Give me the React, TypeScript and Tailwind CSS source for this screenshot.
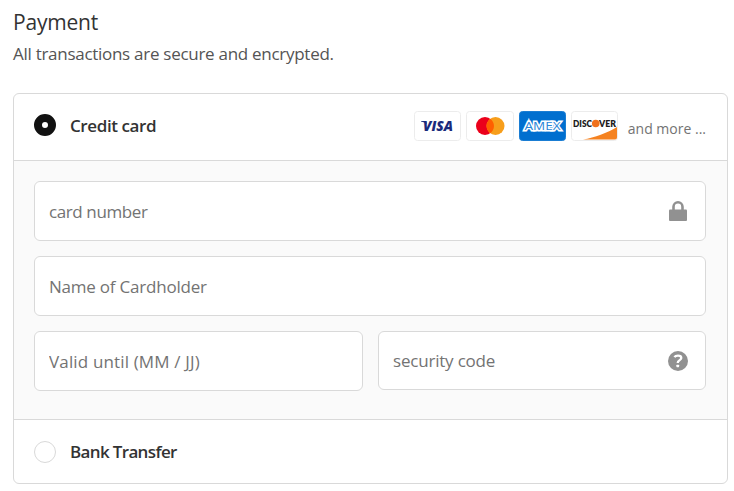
import { useState } from "react";

function VisaLogo() {
  return (
    <svg width="47" height="30" viewBox="0 0 47 30">
      <rect x="0.5" y="0.5" width="46" height="29" rx="3" fill="#fff" stroke="#ececec" />
      <text
        x="9"
        y="20"
        fontFamily="Open Sans, sans-serif"
        fontSize="14"
        fontWeight="800"
        fontStyle="italic"
        fill="#1a2a7c"
        textLength="30"
        lengthAdjust="spacingAndGlyphs"
      >
        VISA
      </text>
      <path d="M7 10h5l1 3c-1.600-1.400-3.500-2.200-6-2.600z" fill="#1a2a7c" />
    </svg>
  );
}

function MastercardLogo() {
  return (
    <svg width="48" height="30" viewBox="0 0 48 30">
      <rect x="0.5" y="0.5" width="47" height="29" rx="3" fill="#fff" stroke="#ececec" />
      <circle cx="19" cy="15" r="9" fill="#eb001b" />
      <circle cx="29.500" cy="15" r="9" fill="#f79e1b" />
      <path d="M24.250 7.700a9 9 0 0 1 0 14.600a9 9 0 0 1 0-14.600z" fill="#ff5f00" />
    </svg>
  );
}

function AmexLogo() {
  return (
    <svg width="47" height="30" viewBox="0 0 47 30">
      <rect x="0.5" y="0.5" width="46" height="29" rx="3" fill="#006fcf" stroke="#1a7dd3" />
      <text
        x="5.500"
        y="19"
        fontFamily="Open Sans, sans-serif"
        fontSize="11.500"
        fontWeight="500"
        fill="#2a86d8"
        stroke="#fff"
        strokeWidth="2.800"
        paintOrder="stroke"
        textLength="36"
        lengthAdjust="spacingAndGlyphs"
      >
        AMEX
      </text>
    </svg>
  );
}

function DiscoverLogo() {
  return (
    <svg width="47" height="30" viewBox="0 0 47 30">
      <rect x="0.5" y="0.5" width="46" height="29" rx="3" fill="#fff" stroke="#ececec" />
      <path d="M12 28.500C24 26.500 36 22 46 16v10.500q0 2-2 2z" fill="#f58220" />
      <g fontFamily="Lato, sans-serif" fontSize="10" fontWeight="800" fill="#1d1d1d">
        <text x="2" y="16" textLength="19" lengthAdjust="spacingAndGlyphs">
          DISC
        </text>
        <text x="28" y="16" textLength="17" lengthAdjust="spacingAndGlyphs">
          VER
        </text>
      </g>
      <circle cx="24.700" cy="12.500" r="3.800" fill="#f0711d" />
    </svg>
  );
}

function LockIcon() {
  return (
    <svg width="18" height="20" viewBox="0 0 18 20">
      <path d="M4.500 10V5.800a4.500 4.500 0 0 1 9 0V10" fill="none" stroke="#919191" strokeWidth="2.600" />
      <rect x="0" y="8.500" width="18" height="11.500" rx="1" fill="#919191" />
    </svg>
  );
}

function HelpIcon() {
  return (
    <svg width="20" height="20" viewBox="0 0 20 20">
      <circle cx="10" cy="10" r="10" fill="#919191" />
      <path
        d="M6.400 6.200C7.200 5 8.500 4.700 10 4.700c2.100 0 3.300 0.900 3.300 2.300 0 2.200-3.600 2.200-3.600 5"
        fill="none"
        stroke="#fff"
        strokeWidth="2.300"
      />
      <rect x="8.400" y="13.700" width="2.700" height="2.500" rx="0.600" fill="#fff" />
    </svg>
  );
}

const inputClass =
  "w-full h-full rounded-[6px] border border-[#d9d9d9] bg-white px-[14px] text-[17px] text-[#737373] placeholder:text-[#737373] outline-none";

export default function App() {
  const [method, setMethod] = useState("card");

  // Radio dot, filled when its method is selected
  const radioClass = (name: string) =>
    `w-[22px] h-[22px] shrink-0 rounded-full bg-white ${
      method === name ? "border-8 border-[#111111]" : "border border-[#d9d9d9]"
    }`;

  return (
    <div className="h-[491px] bg-white pl-[13px] pr-[6px] pt-2 font-['Open_Sans',sans-serif] text-[#333333]">
      <h2 className="text-[21px] leading-7 tracking-[-0.2px]">Payment</h2>
      <p className="mt-1 text-[17px] leading-7 tracking-[-0.28px] text-[#545454]">
        All transactions are secure and encrypted.
      </p>

      <div className="mt-[25px] h-[391px] overflow-hidden rounded-[6px] border border-[#d9d9d9]">
        {/* Credit card */}
        <div className="flex h-[67px] items-center justify-between border-b border-[#d9d9d9] pb-[3px] pl-5 pr-[21px]">
          <button type="button" onClick={() => setMethod("card")} className="flex items-center gap-[14px] pb-px">
            <span className={radioClass("card")} />
            <span className="pt-[2px] text-[17px] font-semibold tracking-[-0.4px]">Credit card</span>
          </button>
          <div className="flex items-center gap-[5px]">
            <VisaLogo />
            <MastercardLogo />
            <AmexLogo />
            <DiscoverLogo />
            <span className="ml-[5px] mt-[5px] text-[14px] text-[#737373]">and more ...</span>
          </div>
        </div>

        {/* Card fields */}
        <div className="h-[259px] border-b border-[#d9d9d9] bg-[#fafafa] pl-5 pr-[21px] pt-5">
          <div className="relative h-[60px]">
            <input type="text" placeholder="card number" className={`${inputClass} tracking-[-0.4px]`} />
            <span className="absolute right-[19px] top-5">
              <LockIcon />
            </span>
          </div>
          <div className="mt-[15px] h-[60px]">
            <input type="text" placeholder="Name of Cardholder" className={`${inputClass} tracking-[-0.22px]`} />
          </div>
          <div className="mt-[15px] flex gap-[15px]">
            <div className="h-[60px] w-[329px]">
              <input type="text" placeholder="Valid until (MM / JJ)" className={`${inputClass} tracking-[0.15px]`} />
            </div>
            <div className="relative h-[59px] flex-1">
              <input type="text" placeholder="security code" className={`${inputClass} tracking-[-0.2px]`} />
              <span className="absolute right-[18px] top-5">
                <HelpIcon />
              </span>
            </div>
          </div>
        </div>

        {/* Bank transfer */}
        <div className="flex h-[63px] items-center px-5">
          <button type="button" onClick={() => setMethod("bank")} className="flex items-center gap-[14px]">
            <span className={radioClass("bank")} />
            <span className="text-[17px] font-semibold tracking-[-0.65px]">Bank Transfer</span>
          </button>
        </div>
      </div>
    </div>
  );
}
